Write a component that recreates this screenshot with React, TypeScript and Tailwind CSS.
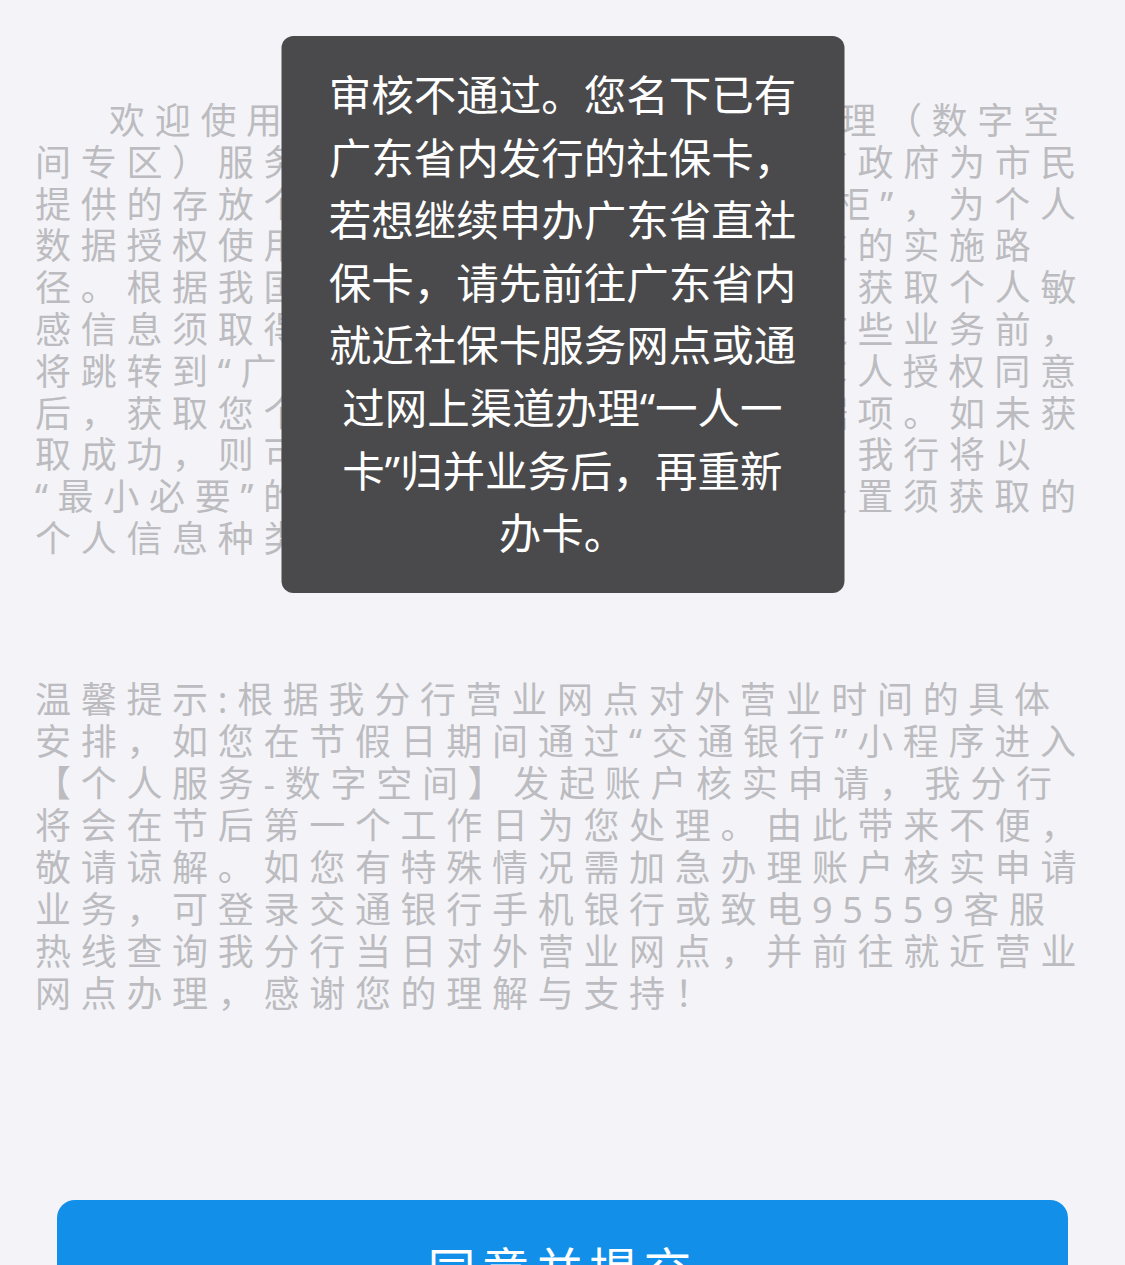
const intro = [
  "欢迎使用交通银行广东省分行业务办理（数字空",
  "间专区）服务。个人数字空间是由广东省政府为市民",
  "提供的存放个人数据、电子证照的“保险柜”，为个人",
  "数据授权使用提供了更便捷、更具操作性的实施路",
  "径。根据我国个人信息保护法相关规定，获取个人敏",
  "感信息须取得本人同意。在您办理我行这些业务前，",
  "将跳转到“广东省个人数字空间”，在您本人授权同意",
  "后，获取您个人相关的电子证照或者数据项。如未获",
  "取成功，则可能影响您后续的业务办理。我行将以",
  "“最小必要”的原则，根据业务办理需要设置须获取的",
  "个人信息种类。",
];

const tips = [
  "温馨提示:根据我分行营业网点对外营业时间的具体",
  "安排，如您在节假日期间通过“交通银行”小程序进入",
  "【个人服务-数字空间】发起账户核实申请，我分行",
  "将会在节后第一个工作日为您处理。由此带来不便，",
  "敬请谅解。如您有特殊情况需加急办理账户核实申请",
  "业务，可登录交通银行手机银行或致电95559客服",
  "热线查询我分行当日对外营业网点，并前往就近营业",
  "网点办理，感谢您的理解与支持！",
];

const toastLines = [
  "审核不通过。您名下已有",
  "广东省内发行的社保卡，",
  "若想继续申办广东省直社",
  "保卡，请先前往广东省内",
  "就近社保卡服务网点或通",
  "过网上渠道办理“一人一",
  "卡”归并业务后，再重新",
  "办卡。",
];

const Toast = () => (
  <div className="absolute left-1/2 top-[36px] w-[563px] -translate-x-1/2 rounded-[12px] bg-[#4a4a4c] px-11 py-7 text-center text-[42.5px] leading-[62.6px] text-white whitespace-nowrap">
    {toastLines.map((line) => (
      <span key={line} className="block">{line}</span>
    ))}
  </div>
);

export default function App() {
  return (
    <div className="relative min-h-screen bg-[#f4f4f8] font-['Noto_Sans','Noto_Sans_CJK_SC',sans-serif]">
      <div className="px-[35px] pt-[100px] text-[36px] leading-[41.8px] tracking-[9.7px] text-[#bcbcc0] whitespace-nowrap">
        {intro.map((line, i) => (
          <span key={line} className={i === 0 ? "block pl-[74px]" : "block"}>{line}</span>
        ))}
      </div>

      <div className="mt-[119px] px-[35px] text-[36px] leading-[42px] tracking-[9.7px] text-[#bcbcc0] whitespace-nowrap">
        {tips.map((line) => (
          <span key={line} className="block">{line}</span>
        ))}
      </div>

      <button className="mx-[57px] mt-[185px] flex h-[140px] w-[1011px] items-center justify-center rounded-[18px] bg-[#118fe9] text-[48px] tracking-[6px] text-white">
        同意并提交
      </button>

      <Toast />
    </div>
  );
}
